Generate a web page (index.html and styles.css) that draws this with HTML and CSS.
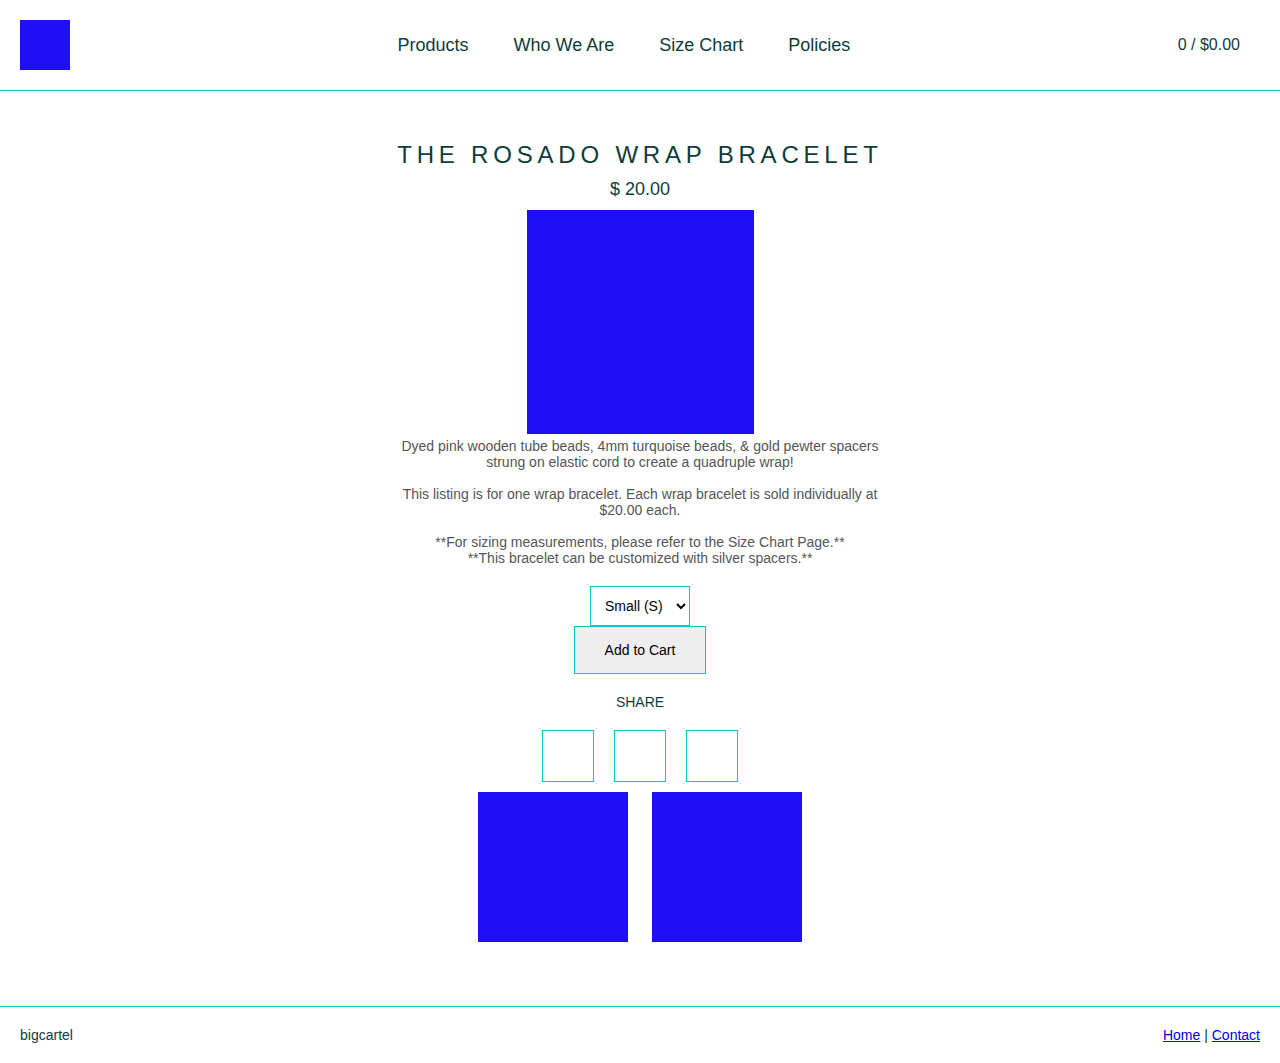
FILE: index.html
```html
<!DOCTYPE html>
<html lang="en">
<head>
<meta charset="utf-8">
<title>The Rosado Wrap Bracelet</title>
<link rel="stylesheet" href="styles.css">
</head>
<body>
<header class="site-header">
  <a class="logo" href="#" aria-label="Home"></a>
  <nav class="main-nav">
    <a href="#">Products</a>
    <a href="#">Who We Are</a>
    <a href="#">Size Chart</a>
    <a href="#">Policies</a>
  </nav>
  <a class="cart" href="#">0 / $0.00</a>
</header>
<main class="product">
  <h1 class="product-title">The Rosado Wrap Bracelet</h1>
  <div class="price">$ 20.00</div>
  <div class="product-image"></div>
  <div class="description">
    <p>Dyed pink wooden tube beads, 4mm turquoise beads, &amp; gold pewter spacers strung on elastic cord to create a quadruple wrap!</p>
    <p>This listing is for one wrap bracelet. Each wrap bracelet is sold individually at $20.00 each.</p>
    <p>**For sizing measurements, please refer to the Size Chart Page.**<br>**This bracelet can be customized with silver spacers.**</p>
  </div>
  <form class="cart-form">
    <select class="option-select">
      <option>Small (S)</option>
      <option>Medium (M)</option>
      <option>Large (L)</option>
    </select>
    <button type="button" class="add-btn">Add to Cart</button>
  </form>
  <div class="share-label">SHARE</div>
  <div class="share-row">
    <a class="share-box" href="#"></a>
    <a class="share-box" href="#"></a>
    <a class="share-box" href="#"></a>
  </div>
  <div class="thumbs">
    <div class="thumb"></div>
    <div class="thumb"></div>
  </div>
</main>
<footer class="site-footer">
  <span class="credit">bigcartel</span>
  <span class="footer-links"><a href="#">Home</a> | <a href="#">Contact</a></span>
</footer>
</body>
</html>
```

FILE: styles.css
```css
* { box-sizing: border-box; }
html, body { margin: 0; padding: 0; }
body {
  font-family: "Liberation Sans", Arial, sans-serif;
  color: #0e3c3c;
  background: #fff;
  min-height: 100vh;
  display: flex;
  flex-direction: column;
}
.site-header {
  height: 91px;
  border-bottom: 1px solid #00cccc;
  display: flex;
  align-items: center;
  justify-content: space-between;
  padding: 0 40px 0 20px;
}
.logo {
  display: block;
  width: 50px;
  height: 50px;
  background: #1e0ff7;
}
.main-nav {
  display: flex;
  gap: 45px;
  font-size: 18px;
}
.main-nav a, .cart {
  color: #0e3c3c;
  text-decoration: none;
}
.cart { font-size: 16px; }
.product {
  flex: 1;
  display: flex;
  flex-direction: column;
  align-items: center;
  padding-top: 49px;
}
.product-title {
  margin: 0;
  font-size: 24px;
  font-weight: normal;
  line-height: 30px;
  text-transform: uppercase;
  letter-spacing: 4.8px;
}
.price {
  font-size: 18px;
  line-height: 24px;
  margin-top: 7px;
}
.product-image {
  width: 227px;
  height: 224px;
  background: #1e0ff7;
  margin-top: 9px;
}
.description {
  width: 480px;
  margin-top: 4px;
  font-size: 14px;
  line-height: 16px;
  color: #555;
  text-align: center;
}
.description p { margin: 0 0 16px; }
.description p:last-child { margin-bottom: 0; }
.cart-form {
  margin-top: 20px;
  display: flex;
  flex-direction: column;
  align-items: center;
}
.option-select {
  width: 100px;
  height: 40px;
  border: 1px solid #00cccc;
  border-radius: 0;
  background: #fff;
  font-family: "Liberation Sans", Arial, sans-serif;
  font-size: 14px;
  color: #000;
  padding: 0 10px;
}
.add-btn {
  width: 132px;
  height: 48px;
  border: 1px solid #00cccc;
  background: #eeeeee;
  font-family: "Liberation Sans", Arial, sans-serif;
  font-size: 14px;
  color: #000;
}
.share-label {
  margin-top: 20px;
  font-size: 14px;
  line-height: 16px;
}
.share-row {
  display: flex;
  gap: 20px;
  margin-top: 20px;
}
.share-box {
  display: block;
  width: 52px;
  height: 52px;
  border: 1px solid #00cccc;
}
.thumbs {
  display: flex;
  gap: 24px;
  margin-top: 10px;
}
.thumb {
  width: 150px;
  height: 150px;
  background: #1e0ff7;
}
.site-footer {
  height: 57px;
  border-top: 1px solid #00cccc;
  display: flex;
  align-items: center;
  justify-content: space-between;
  padding: 0 20px;
  font-size: 14px;
}
.footer-links a { color: #0000ee; }
.footer-links { color: #0e3c3c; }
```
